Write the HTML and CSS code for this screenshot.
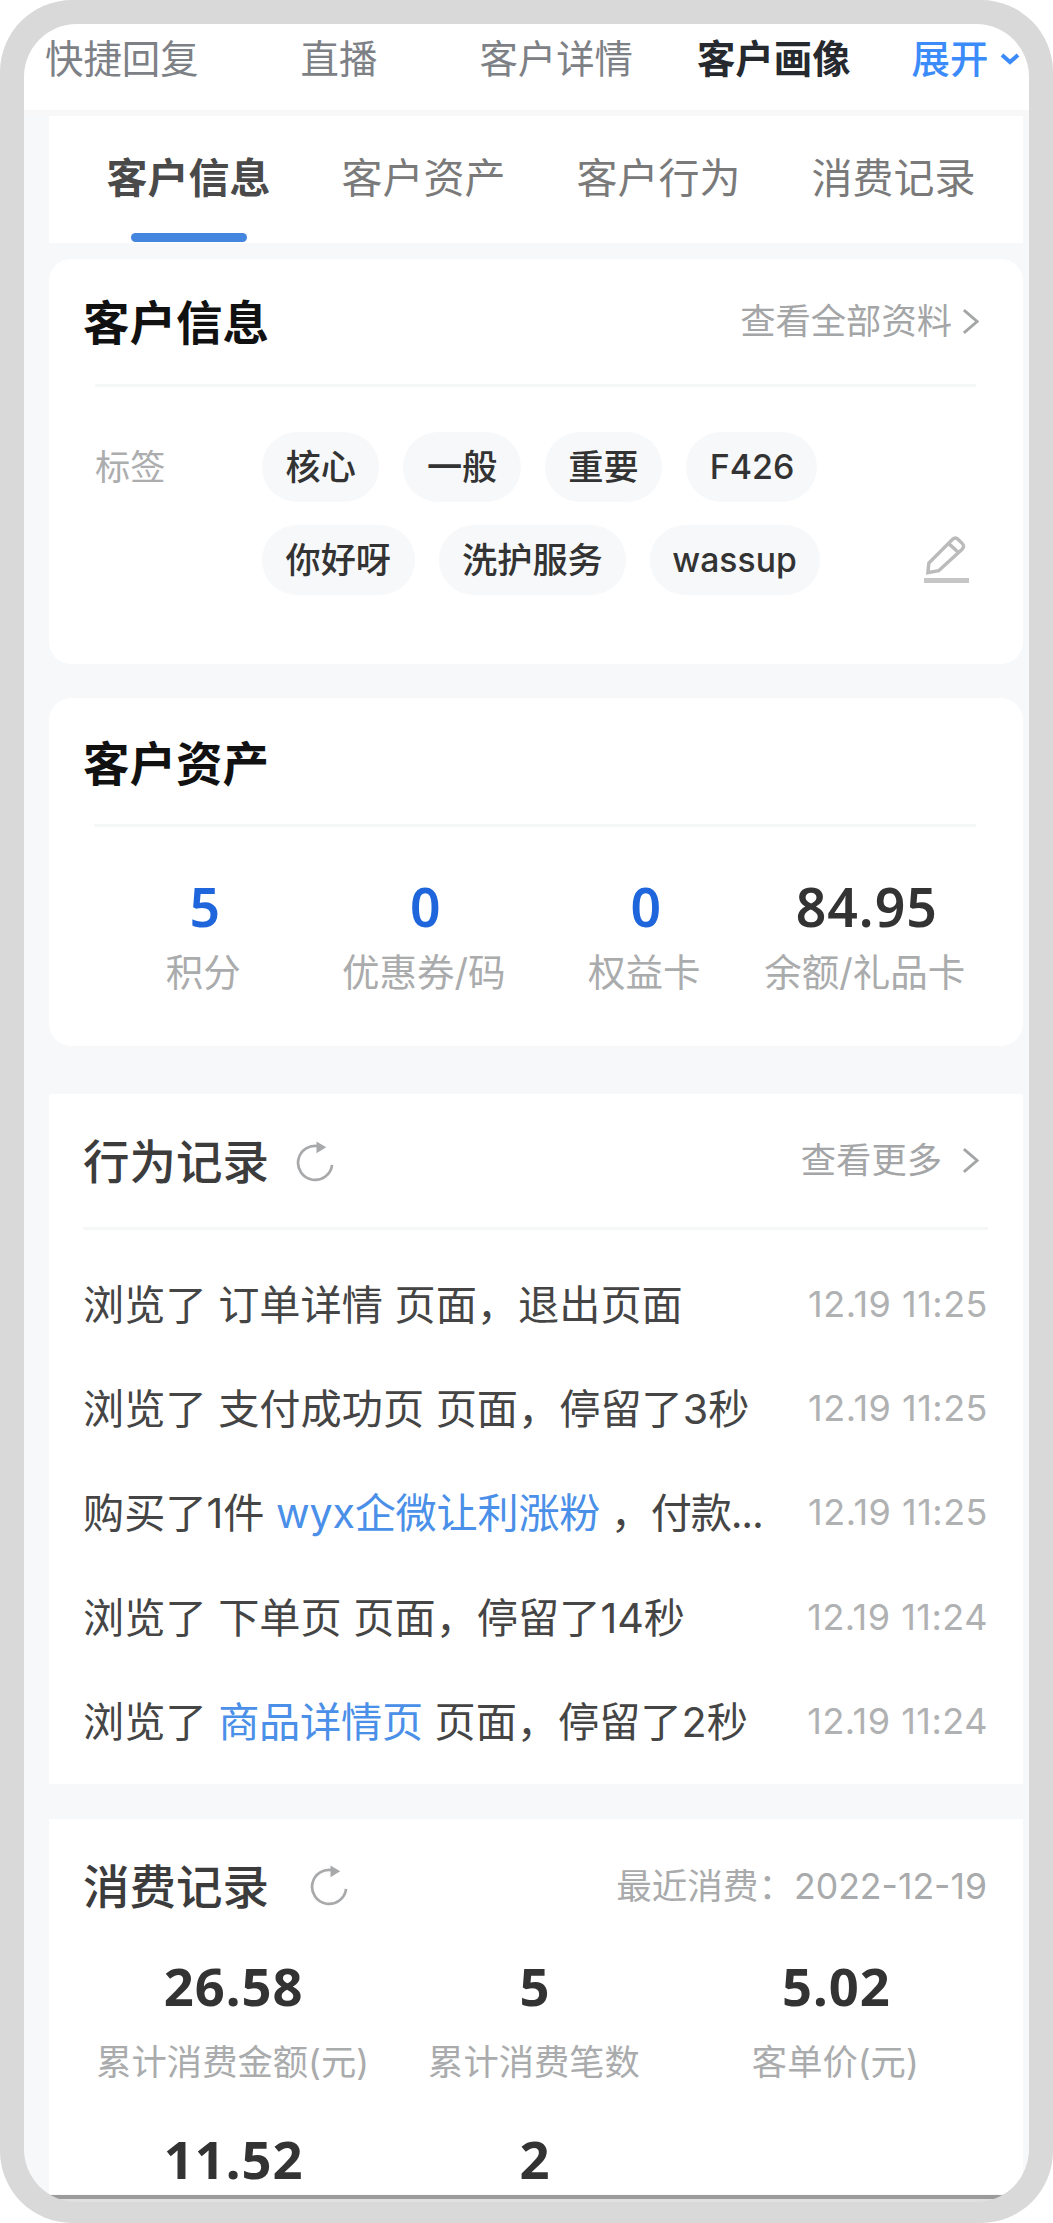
FILE: index.html
```html
<!DOCTYPE html>
<html lang="zh-CN">
<head>
<meta charset="utf-8">
<title>客户画像</title>
<link rel="stylesheet" href="styles.css">
</head>
<body>
<div class="phone">
  <div class="screen">
    <nav class="topnav">
      <span>快捷回复</span>
      <span>直播</span>
      <span>客户详情</span>
      <span class="current">客户画像</span>
      <span class="expand">展开<svg class="caret" viewBox="0 0 22 14"><path d="M3 3l8 7 8-7"/></svg></span>
    </nav>
    <main class="content">
      <div class="tabs">
        <span class="tab active">客户信息</span>
        <span class="tab">客户资产</span>
        <span class="tab">客户行为</span>
        <span class="tab">消费记录</span>
      </div>

      <section class="card info">
        <header class="head">
          <h2>客户信息</h2>
          <a class="more">查看全部资料<svg class="arrow" viewBox="0 0 18 28"><path d="M2 2l14 12L2 26"/></svg></a>
        </header>
        <div class="tags">
          <span class="tags-label">标签</span>
          <div class="chips">
            <span class="chip">核心</span><span class="chip">一般</span><span class="chip">重要</span><span class="chip">F426</span>
            <span class="chip">你好呀</span><span class="chip">洗护服务</span><span class="chip">wassup</span>
          </div>
          <svg class="edit" viewBox="0 0 48 50"><path d="M5 38l1-10L30 4q3-3 6 0l4 4q3 3 0 6L16 36zM26 8l10 9"/><path class="base" d="M1 46h46"/></svg>
        </div>
      </section>

      <section class="card assets">
        <header class="head"><h2>客户资产</h2></header>
        <div class="asset-grid">
          <div class="stat link"><b>5</b><span>积分</span></div>
          <div class="stat link"><b>0</b><span>优惠券/码</span></div>
          <div class="stat link"><b>0</b><span>权益卡</span></div>
          <div class="stat"><b>84.95</b><span>余额/礼品卡</span></div>
        </div>
      </section>

      <section class="card square log">
        <header class="head">
          <h2>行为记录</h2>
          <svg class="refresh" viewBox="0 0 40 42"><path d="M24 6A17.500 17.500 0 1 0 37 25"/><path class="tip" d="M21 1l10 6-10 6z"/></svg>
          <a class="more wide">查看更多<svg class="arrow" viewBox="0 0 18 28"><path d="M2 2l14 12L2 26"/></svg></a>
        </header>
        <ul class="rows">
          <li><p>浏览了 订单详情 页面，退出页面</p><time>12.19 11:25</time></li>
          <li><p>浏览了 支付成功页 页面，停留了3秒</p><time>12.19 11:25</time></li>
          <li><p>购买了1件 <a>wyx企微让利涨粉</a><span class="tight"> ，付款...</span></p><time>12.19 11:25</time></li>
          <li><p>浏览了 下单页 页面，停留了14秒</p><time>12.19 11:24</time></li>
          <li><p>浏览了 <a>商品详情页</a> 页面，停留了2秒</p><time>12.19 11:24</time></li>
        </ul>
      </section>

      <section class="card square spend">
        <header class="head">
          <h2>消费记录</h2>
          <svg class="refresh" viewBox="0 0 40 42"><path d="M24 6A17.500 17.500 0 1 0 37 25"/><path class="tip" d="M21 1l10 6-10 6z"/></svg>
          <span class="recent">最近消费：2022-12-19</span>
        </header>
        <div class="spend-grid">
          <div class="stat"><b>26.58</b><span>累计消费金额(元)</span></div>
          <div class="stat"><b>5</b><span>累计消费笔数</span></div>
          <div class="stat"><b>5.02</b><span>客单价(元)</span></div>
          <div class="stat"><b>11.52</b></div>
          <div class="stat"><b>2</b></div>
        </div>
      </section>
    </main>
  </div>
</div>
</body>
</html>
```
FILE: styles.css
```css
* { box-sizing: border-box; }
body {
  margin: 0;
  background: #fff;
  color: #333;
  font-family: Inter, "Noto Sans CJK SC", sans-serif;
}
h2, p, ul { margin: 0; padding: 0; }
ul { list-style: none; }
svg { fill: none; flex: none; }

.phone {
  width: 1053px;
  height: 2223px;
  padding: 24px 24px 21px;
  border-radius: 72px;
  background: #d9d9d9;
}
.screen {
  height: 2178px;
  display: flex;
  flex-direction: column;
  overflow: hidden;
  border-radius: 53px;
  background: linear-gradient(#9b9b9b, #9b9b9b) 0 2171px / 100% 4px no-repeat, #e0e0e0;
}

.topnav {
  flex: none;
  display: flex;
  height: 92px;
  padding: 0 0 23px 21px;
  align-items: center;
  border-bottom: 6px solid #f8f8f9;
  background: #fff;
  color: #7d8186;
  font-size: 38.400px;
  white-space: nowrap;
}
.topnav span:nth-child(2) { margin-left: 102px; }
.topnav span:nth-child(3) { margin-left: 102px; }
.topnav .current { margin-left: 64px; color: #26292e; font-weight: 700; }
.topnav .expand { margin-left: 61px; color: #3b8bfa; font-weight: 500; }
.caret {
  width: 22px;
  height: 14px;
  margin-left: 11px;
  vertical-align: 7px;
  stroke: #3b8bfa;
  stroke-width: 4;
}

.content {
  flex: none;
  height: 2079px;
  padding: 0 6px 0 25px;
  overflow: hidden;
  background: #f7f8fa;
}

.tabs {
  display: flex;
  height: 127px;
  padding: 0 12px 0 22px;
  background: #fff;
}
.tab {
  flex: 1;
  display: flex;
  flex-direction: column;
  align-items: center;
  color: #7a7a7a;
  font-size: 41px;
  line-height: 124px;
  white-space: nowrap;
}
.tab.active { color: #4a4a4a; font-weight: 700; }
.tab.active::after {
  content: "";
  width: 116px;
  height: 9px;
  margin-top: -7px;
  border-radius: 5px;
  background: #4485e0;
}

.card { border-radius: 22px; background: #fff; }
.card.square { border-radius: 0; }
.head {
  display: flex;
  align-items: center;
  border-bottom: 3px solid #f6f7f7;
}
.head h2 {
  color: #111;
  font-size: 46.500px;
  font-weight: 700;
  line-height: 60px;
  white-space: nowrap;
}
.more {
  display: flex;
  align-items: center;
  margin-left: auto;
  color: #a4a5a6;
  font-size: 35.300px;
  line-height: 50px;
}
.arrow {
  width: 17px;
  height: 27px;
  margin-left: 10px;
  stroke: #a4a5a6;
  stroke-width: 3;
}
.more.wide .arrow { margin-left: 20px; }

.info { height: 405px; margin-top: 16px; padding: 0 47px 0 46px; }
.info .head, .assets .head { height: 128px; }
.info h2, .assets h2 { margin-left: -12px; padding-top: 3px; }
.assets h2 { padding-top: 6px; }
.info .more { margin-right: -3px; }
.tags {
  display: flex;
  padding-top: 45px;
  font-size: 35.200px;
}
.tags-label { width: 167px; color: #acadae; line-height: 70px; }
.chips {
  display: flex;
  flex-wrap: wrap;
  gap: 23px 24px;
  width: 580px;
}
.chip {
  height: 70px;
  padding: 0 23.500px;
  border-radius: 35px;
  background: #f7f8fa;
  color: #333;
  font-weight: 500;
  line-height: 70px;
}
.chip:nth-child(4) { width: 131px; margin-right: 10px; font-size: 34px; }
.chip:nth-child(7) { width: 170px; padding: 0 22px; font-size: 33.700px; }
.edit {
  width: 47px;
  height: 50px;
  margin: 103px 0 0 81px;
  stroke: #bbb;
  stroke-width: 3.500;
}
.edit .base { stroke: #c6c6c6; stroke-width: 5; }

.assets { height: 348px; margin-top: 34px; padding: 0 47px 0 45px; }
.assets .head { height: 129px; }
.assets h2 { margin-left: -11px; }
.asset-grid {
  display: grid;
  grid-template-columns: repeat(4, 1fr);
  margin: 0 1px 0 -1px;
  padding-top: 45px;
  font-size: 37.500px;
}
.stat {
  display: flex;
  flex-direction: column;
  align-items: center;
  color: #aaabac;
  white-space: nowrap;
}
.stat b {
  margin-left: 2px;
  color: #333;
  font-family: "Noto Sans", sans-serif;
  font-size: 52.500px;
  font-weight: 700;
  letter-spacing: 1px;
  line-height: 70px;
}
.asset-grid b { margin-left: 4px; font-size: 53.500px; font-weight: 600; }
.stat.link b { color: #1f66dc; }
.stat span { line-height: 62px; }

.log { height: 690px; margin-top: 48px; padding: 0 35px 0 34px; }
.log .head { height: 136px; }
.log h2, .spend h2 { color: #3c3c3c; font-weight: 500; }
.log h2 { padding-top: 2px; }
.log .more { margin-right: 9px; }
.refresh {
  width: 39px;
  height: 42px;
  margin-left: 27px;
  stroke: #a8a9ab;
  stroke-width: 2.800;
}
.refresh .tip { fill: #a8a9ab; stroke: none; }
.rows { padding-top: 20px; }
.rows li {
  display: flex;
  align-items: center;
  justify-content: space-between;
  height: 104.200px;
  white-space: nowrap;
}
.rows p { color: #454545; font-size: 41.200px; }
.rows .tight { letter-spacing: -1.200px; }
.rows a { color: #4a8fe8; letter-spacing: -0.250px; }
.rows time { padding-top: 4px; color: #b0b1b2; font-size: 36px; letter-spacing: 0.500px; }

.spend { height: 375px; margin-top: 35px; padding: 0 36px 0 34px; }
.spend .head { height: 132px; border: 0; }
.spend h2 { padding-top: 4px; }
.spend .refresh { margin-left: 41px; }
.recent { margin: -3px 0 0 auto; color: #a9aaab; font-size: 35.600px; white-space: nowrap; }
.spend-grid {
  display: grid;
  grid-template-columns: repeat(3, 1fr);
  row-gap: 30px;
  margin: 0 1px 0 -1px;
  font-size: 35.300px;
}
.spend-grid .stat span { padding-top: 11px; }
```
